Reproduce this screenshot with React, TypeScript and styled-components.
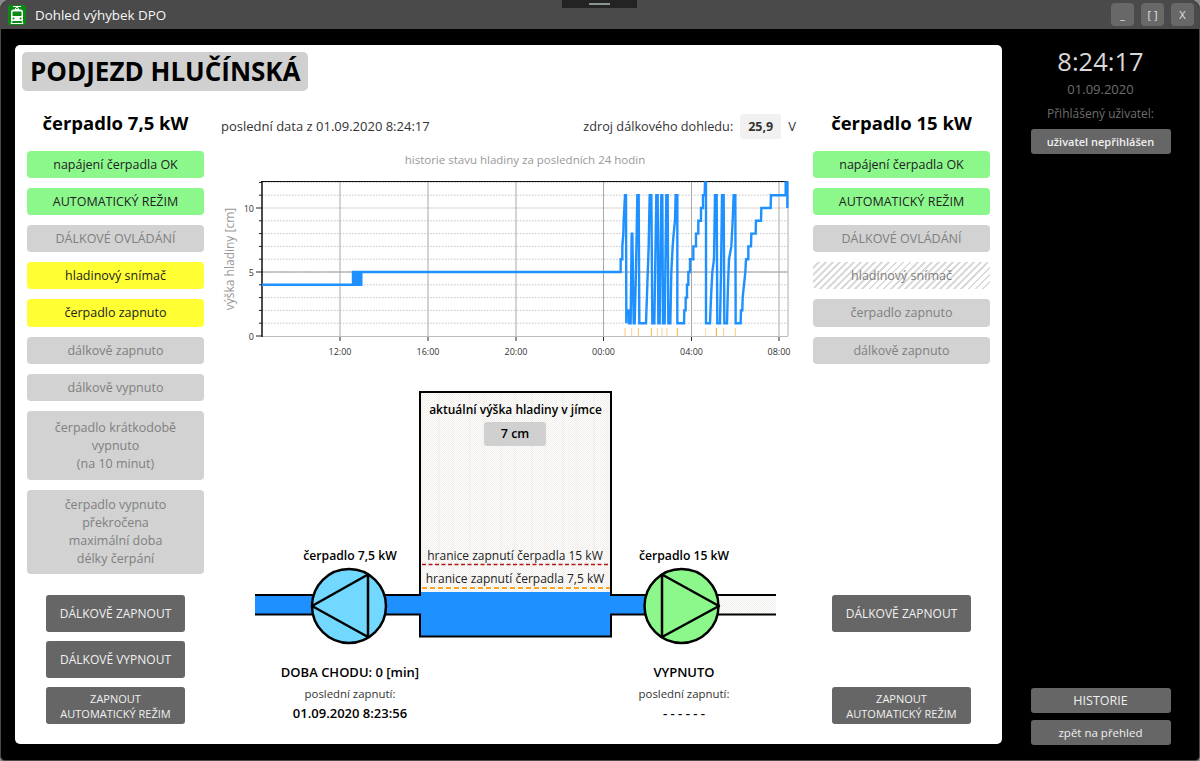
import { FC } from "react";
import styled, { createGlobalStyle } from "styled-components";

const GlobalStyle = createGlobalStyle`
  html, body {
    margin: 0;
    padding: 0;
    background: #8a8a8a;
    font-family: "Open Sans", "Noto Sans", sans-serif;
  }
  * { box-sizing: border-box; }
`;

const AppWindow = styled.div`
  position: relative;
  width: 1200px;
  height: 761px;
  background: #000;
  border: 1px solid #4a4a4a;
  border-top: 0;
  border-radius: 9px 9px 5px 5px;
  overflow: hidden;
  display: flex;
  flex-direction: column;
`;

const TitleBar = styled.header`
  height: 29px;
  background: #4a4a4a;
  display: flex;
  align-items: center;
  padding: 0 5px 0 7px;
  flex-shrink: 0;
`;

const AppTitle = styled.span`
  margin-left: 9px;
  flex: 1;
  color: #f6f6f6;
  font-size: 13.4px;
`;

const Notch = styled.div`
  position: absolute;
  top: 0;
  left: 561px;
  width: 75px;
  height: 8px;
  background: #232323;
  &::after {
    content: "";
    position: absolute;
    left: 27px;
    top: 3px;
    width: 21px;
    height: 2px;
    background: #8b9590;
  }
`;

const WindowButtons = styled.div`
  display: flex;
  gap: 7px;
`;

const WindowButton = styled.div`
  width: 23px;
  height: 23px;
  background: #686868;
  border-radius: 4px;
  color: #e4e4e4;
  font-size: 11px;
  display: flex;
  align-items: center;
  justify-content: center;
`;

const Body = styled.div`
  flex: 1;
  display: flex;
  padding: 16px 0 16px 14px;
`;

const Panel = styled.main`
  width: 987px;
  height: 699px;
  background: #fff;
  border-radius: 5px;
  padding: 7px 12px 0;
`;

const PageTitle = styled.h1`
  display: inline-block;
  margin: 0 0 0 -5px;
  height: 39px;
  padding: 0 7px 0 8px;
  background: #d0d0d0;
  border-radius: 5px;
  color: #000;
  font-size: 26px;
  line-height: 39px;
  font-weight: 700;
`;

const Columns = styled.div`
  display: grid;
  grid-template-columns: 177px 609px 177px;
  margin-top: 17px;
`;

const PumpColumn = styled.section`
  height: 616px;
  display: flex;
  flex-direction: column;
`;

const PumpHeading = styled.h2`
  margin: 0;
  height: 43px;
  color: #000;
  font-size: 18.5px;
  font-weight: 700;
  line-height: 30px;
  text-align: center;
`;

const StatusStack = styled.div`
  display: flex;
  flex-direction: column;
  gap: 10px;
`;

type Tone = "ok" | "warn" | "off" | "hatch";

const toneStyles: Record<Tone, string> = {
  ok: "background: #8cf88c; color: #222;",
  warn: "background: #ffff33; color: #222;",
  off: "background: #d2d2d2; color: #808080;",
  hatch:
    "background: repeating-linear-gradient(135deg, #fff 0 3px, #dcdad8 3px 5px); color: #808080;",
};

const StatusBox = styled.div<{ $tone: Tone; $h?: number }>`
  ${(p) => toneStyles[p.$tone]}
  min-height: ${(p) => p.$h ?? 27}px;
  border-radius: 4px;
  font-size: 12.5px;
  line-height: 18px;
  display: flex;
  align-items: center;
  justify-content: center;
  text-align: center;
`;

const ColumnFooter = styled.div`
  margin-top: auto;
  height: 129px;
  display: flex;
  flex-direction: column;
  align-items: center;
  justify-content: space-between;
`;

const DarkButton = styled.button<{ $small?: boolean }>`
  width: 139px;
  height: 37px;
  padding: 0;
  border: 0;
  background: #666;
  border-radius: 3px;
  color: #f0f0f0;
  font-family: inherit;
  font-size: ${(p) => (p.$small ? "11px" : "12px")};
  line-height: 15px;
`;

const Centre = styled.section`
  display: flex;
  flex-direction: column;
`;

const InfoRow = styled.div`
  height: 36px;
  padding: 0 17px 0 17px;
  display: flex;
  align-items: center;
  color: #333;
  font-size: 13px;
`;

const InfoGrow = styled.span`
  flex: 1;
`;

const SourceLabel = styled.span`
  font-size: 12.7px;
`;

const VoltageChip = styled.span`
  width: 41px;
  height: 25px;
  margin: 0 7px;
  background: #f1f1f1;
  border-radius: 3px;
  font-size: 12.5px;
  font-weight: 700;
  line-height: 25px;
  text-align: center;
`;

const ChartTitle = styled.div`
  margin: 8px 0 5px;
  padding-left: 33px;
  height: 15px;
  color: #999;
  font-size: 11.5px;
  line-height: 15px;
  text-align: center;
`;

const Drawing = styled.svg<{ $gap?: number }>`
  display: block;
  margin-top: ${(p) => p.$gap ?? 0}px;
  text {
    font-family: "Open Sans", "Noto Sans", sans-serif;
  }
`;

const PumpStates = styled.div`
  display: flex;
  gap: 134px;
  margin: 15px 0 0 46px;
`;

const PumpState = styled.div`
  width: 200px;
  text-align: center;
  color: #000;
`;

const StateTitle = styled.div`
  font-size: 13px;
  font-weight: 600;
  line-height: 18px;
`;

const StateLabel = styled.div`
  margin-top: 5px;
  color: #333;
  font-size: 11.4px;
  line-height: 16px;
`;

const StateValue = styled.div`
  margin-top: 2px;
  font-size: 13px;
  font-weight: 600;
  line-height: 18px;
`;

const SidePane = styled.aside`
  width: 198px;
  height: 700px;
  display: flex;
  flex-direction: column;
  align-items: center;
  justify-content: space-between;
`;

const SideGroup = styled.div`
  width: 140px;
  display: flex;
  flex-direction: column;
  align-items: center;
`;

const Clock = styled.div`
  color: #d8d8d8;
  font-size: 25.5px;
  line-height: 32px;
`;

const ClockDate = styled.div`
  margin-top: 3px;
  color: #6e6e6e;
  font-size: 13px;
  line-height: 18px;
`;

const UserLabel = styled.div`
  margin-top: 8px;
  color: #6e6e6e;
  font-size: 12px;
  line-height: 16px;
  white-space: nowrap;
`;

const SideButton = styled.div<{ $big?: boolean; $bold?: boolean }>`
  width: 140px;
  height: 25px;
  margin-top: ${(p) => (p.$big ? 0 : 7)}px;
  background: #666;
  border-radius: 3px;
  color: #f0f0f0;
  font-size: ${(p) => (p.$bold ? 11 : p.$big ? 12.5 : 11.5)}px;
  font-weight: ${(p) => (p.$bold ? 600 : 400)};
  line-height: 25px;
  text-align: center;
`;

const px = (zx: number) => 590 + zx / 3;
const py = (v: number) => 336 - v * 12.8;

const hours = [
  { x: 340, label: "12:00" },
  { x: 428, label: "16:00" },
  { x: 516, label: "20:00" },
  { x: 603.5, label: "00:00" },
  { x: 691.5, label: "04:00" },
  { x: 779, label: "08:00" },
];

// level trace read off the reference, x in 1/3 px from 590
const trace: [number, number][] = [
  [92, 5], [92, 6], [97, 6], [97, 7], [100, 8], [101, 9], [103, 10], [105, 11], [108, 11], [109, 1],
  [109, 2], [116, 2], [117, 1], [122, 1], [125, 8], [127, 8], [131, 1], [134, 1], [137, 4], [140, 8],
  [142, 11], [146, 11], [148, 1], [155, 1], [168, 1], [172, 4], [176, 7], [179, 11], [184, 11], [187, 1],
  [193, 1], [196, 6], [199, 11], [203, 11], [205, 1], [209, 1], [212, 8], [214, 11], [217, 11], [219, 1],
  [224, 1], [227, 7], [229, 11], [233, 11], [235, 1], [241, 1], [244, 5], [248, 7], [251, 8], [255, 9],
  [257, 11], [262, 11], [262, 1], [282, 1], [283, 2], [287, 2], [287, 3], [291, 3], [291, 4], [295, 4],
  [295, 5], [300, 5], [300, 6], [310, 6], [310, 7], [318, 7], [318, 8], [325, 8], [325, 9], [333, 9],
  [333, 10], [339, 10], [339, 11], [344, 11], [345, 12], [348, 12], [348, 1], [360, 1], [363, 3], [367, 5],
  [372, 6], [375, 11], [380, 11], [382, 1], [390, 1], [393, 5], [396, 11], [401, 11], [403, 1], [411, 1],
  [414, 4], [417, 6], [424, 7], [428, 9], [431, 11], [436, 11], [437, 1], [452, 1], [453, 2], [457, 2],
  [458, 3], [462, 4], [466, 5], [468, 6], [475, 6], [475, 7], [483, 7], [484, 8], [497, 8], [498, 9],
  [513, 9], [514, 10], [542, 10], [543, 11], [587, 11], [587, 12], [592, 12], [592, 10],
];

const pumpTicks: [number, number][] = [
  [105, 0.6], [125, 0.5], [145, 0.7], [184, 0.8], [202, 0.5], [216, 0.5], [231, 0.5], [262, 0.9],
  [347, 0.4], [379, 1], [401, 0.6], [436, 0.6],
];

const LevelChart: FC = () => {
  const line =
    `262,${py(4)} 353,${py(4)} 353,${py(5)} 620.6,${py(5)} ` +
    trace.map(([x, v]) => `${px(x)},${py(v)}`).join(" ");
  return (
    <Drawing width={609} height={196} viewBox="204 172 609 196">
      <text
        x={234}
        y={259}
        fontSize={12}
        fill="#999"
        textAnchor="middle"
        transform="rotate(-90 234 259)"
      >
        výška hladiny [cm]
      </text>
      {Array.from({ length: 12 }, (_, v) => v + 1).map((v) => (
        <line
          key={v}
          x1={262}
          x2={788}
          y1={py(v)}
          y2={py(v)}
          stroke="#c4c4c4"
          strokeDasharray="1.5 1.5"
        />
      ))}
      {Array.from({ length: 13 }, (_, v) => v).map((v) => (
        <line key={v} x1={v % 5 === 0 ? 256 : 259} x2={262} y1={py(v)} y2={py(v)} stroke="#222" />
      ))}
      <line x1={262} x2={788} y1={py(10)} y2={py(10)} stroke="#efe9e5" strokeWidth={2} />
      <line x1={262} x2={788} y1={py(5)} y2={py(5)} stroke="#9a9a9a" />
      {hours.map((h) => (
        <g key={h.label}>
          <line x1={h.x} x2={h.x} y1={182} y2={336} stroke="#a8a8a8" />
          <line x1={h.x} x2={h.x} y1={336} y2={341} stroke="#222" />
          <text x={h.x} y={355} fontSize={9} fill="#333" textAnchor="middle">
            {h.label}
          </text>
        </g>
      ))}
      <line x1={788} x2={788} y1={182} y2={336} stroke="#b0b0b0" />
      <line x1={261} x2={788} y1={336.5} y2={336.5} stroke="#bdbdbd" />
      <line x1={261} x2={788} y1={181.5} y2={181.5} stroke="#111" />
      <line x1={262} x2={262} y1={181} y2={337} stroke="#111" strokeWidth={1.5} />
      {pumpTicks.map(([x, o]) => (
        <line key={x} x1={px(x)} x2={px(x)} y1={328} y2={336} stroke="#f5a623" strokeOpacity={o} />
      ))}
      <rect x={352} y={272} width={10.5} height={14} fill="#1e90ff" />
      <polyline points={line} fill="none" stroke="#1e90ff" strokeWidth={2.4} />
      <text x={254} y={212} fontSize={9} fill="#333" textAnchor="end">10</text>
      <text x={254} y={276} fontSize={9} fill="#333" textAnchor="end">5</text>
      <text x={254} y={340} fontSize={9} fill="#333" textAnchor="end">0</text>
    </Drawing>
  );
};

const PumpSymbol: FC<{ cx: number; fill: string; tip: number; base: number }> = ({ cx, fill, tip, base }) => (
  <g stroke="#000" strokeWidth={2.5} strokeLinejoin="round">
    <circle cx={cx} cy={606} r={37} fill={fill} />
    <polygon points={`${tip},606 ${base},574.5 ${base},637`} fill={fill} />
  </g>
);

const PitDiagram: FC = () => (
  <Drawing $gap={12} width={609} height={268} viewBox="204 380 609 268">
    <defs>
      <pattern id="dither" width={2} height={2} patternUnits="userSpaceOnUse">
        <rect width={2} height={2} fill="#fdfdfc" />
        <rect width={1} height={1} fill="#f0eeec" />
        <rect x={1} y={1} width={1} height={1} fill="#f3f1ef" />
      </pattern>
      <pattern id="streaks" width={31} height={10} patternUnits="userSpaceOnUse">
        <rect x={4} width={2} height={10} fill="#f3e4d8" />
        <rect x={17} width={3} height={10} fill="#f6ebe2" />
      </pattern>
    </defs>

    <rect x={420} y={392} width={191} height={244} fill="url(#dither)" />
    <rect x={420} y={392} width={191} height={200} fill="url(#streaks)" fillOpacity={0.3} />
    <rect x={720} y={596} width={56} height={18} fill="url(#dither)" />

    <rect x={255} y={595} width={170} height={19} fill="#1e90ff" />
    <rect x={606} y={595} width={45} height={19} fill="#1e90ff" />
    <rect x={420} y={592} width={191} height={44} fill="#1e90ff" />

    <path
      d="M255 595 H420 V392 H611 V595 H776 M255 614.5 H420 V636.5 H611 V614.5 H776"
      fill="none"
      stroke="#000"
      strokeWidth={2}
    />

    <line x1={422} x2={610} y1={564.5} y2={564.5} stroke="#b01818" strokeWidth={1.5} strokeDasharray="4 2.5" />
    <line x1={422} x2={610} y1={588} y2={588} stroke="#f5a623" strokeWidth={2} strokeDasharray="5 3" />

    <PumpSymbol cx={349} fill="#73d8ff" tip={312} base={368} />
    <PumpSymbol cx={681.5} fill="#8cf88c" tip={719} base={662} />

    <text x={350} y={560} fontSize={12.2} fontWeight={600} fill="#000" textAnchor="middle">čerpadlo 7,5 kW</text>
    <text x={684} y={560} fontSize={12.2} fontWeight={600} fill="#000" textAnchor="middle">čerpadlo 15 kW</text>

    <text x={515.5} y={414} fontSize={12} fontWeight={600} fill="#000" textAnchor="middle">aktuální výška hladiny v jímce</text>
    <rect x={484} y={422} width={62} height={24} rx={3} fill="#d0d0d0" />
    <text x={515} y={438} fontSize={12.5} fontWeight={600} fill="#000" textAnchor="middle">7 cm</text>

    <text x={515} y={560} fontSize={12} fill="#222" textAnchor="middle">hranice zapnutí čerpadla 15 kW</text>
    <text x={515} y={583} fontSize={12} fill="#222" textAnchor="middle">hranice zapnutí čerpadla 7,5 kW</text>
  </Drawing>
);

const TramLogo: FC = () => (
  <svg width={18} height={20} viewBox="0 0 18 20">
    <rect width={18} height={20} rx={2} fill="#0a8a14" />
    <path d="M5 1.5 H13 M9 1.5 L7 4.5 H11 Z" stroke="#fff" strokeWidth={1} fill="none" />
    <path
      d="M5 4.5 H13 Q15 4.5 15 7 V15 Q15 16 14 16 H4 Q3 16 3 15 V7 Q3 4.5 5 4.5 Z"
      fill="#fff"
    />
    <rect x={4.5} y={6.5} width={9} height={4.5} fill="#0a8a14" />
    <circle cx={5.5} cy={13.5} r={1} fill="#0a8a14" />
    <circle cx={12.5} cy={13.5} r={1} fill="#0a8a14" />
    <path d="M4 16 L3 18.5 M14 16 L15 18.5 M3 18.5 H15" stroke="#fff" strokeWidth={1} />
  </svg>
);

const App: FC = () => (
  <AppWindow>
    <GlobalStyle />
    <TitleBar>
      <TramLogo />
      <AppTitle>Dohled výhybek DPO</AppTitle>
      <WindowButtons>
        <WindowButton>_</WindowButton>
        <WindowButton>[ ]</WindowButton>
        <WindowButton>X</WindowButton>
      </WindowButtons>
    </TitleBar>
    <Notch />
    <Body>
      <Panel>
        <PageTitle>PODJEZD HLUČÍNSKÁ</PageTitle>
        <Columns>
          <PumpColumn>
            <PumpHeading>čerpadlo 7,5 kW</PumpHeading>
            <StatusStack>
              <StatusBox $tone="ok">napájení čerpadla OK</StatusBox>
              <StatusBox $tone="ok">AUTOMATICKÝ REŽIM</StatusBox>
              <StatusBox $tone="off">DÁLKOVÉ OVLÁDÁNÍ</StatusBox>
              <StatusBox $tone="warn">hladinový snímač</StatusBox>
              <StatusBox $tone="warn" $h={28}>čerpadlo zapnuto</StatusBox>
              <StatusBox $tone="off">dálkově zapnuto</StatusBox>
              <StatusBox $tone="off">dálkově vypnuto</StatusBox>
              <StatusBox $tone="off" $h={69}>
                čerpadlo krátkodobě
                <br />
                vypnuto
                <br />
                (na 10 minut)
              </StatusBox>
              <StatusBox $tone="off" $h={84}>
                čerpadlo vypnuto
                <br />
                překročena
                <br />
                maximální doba
                <br />
                délky čerpání
              </StatusBox>
            </StatusStack>
            <ColumnFooter>
              <DarkButton>DÁLKOVĚ ZAPNOUT</DarkButton>
              <DarkButton>DÁLKOVĚ VYPNOUT</DarkButton>
              <DarkButton $small>
                ZAPNOUT
                <br />
                AUTOMATICKÝ REŽIM
              </DarkButton>
            </ColumnFooter>
          </PumpColumn>

          <Centre>
            <InfoRow>
              <InfoGrow>poslední data z 01.09.2020 8:24:17</InfoGrow>
              <SourceLabel>zdroj dálkového dohledu:</SourceLabel>
              <VoltageChip>25,9</VoltageChip>
              <span>V</span>
            </InfoRow>
            <ChartTitle>historie stavu hladiny za posledních 24 hodin</ChartTitle>
            <LevelChart />
            <PitDiagram />
            <PumpStates>
              <PumpState>
                <StateTitle>DOBA CHODU: 0 [min]</StateTitle>
                <StateLabel>poslední zapnutí:</StateLabel>
                <StateValue>01.09.2020 8:23:56</StateValue>
              </PumpState>
              <PumpState>
                <StateTitle>VYPNUTO</StateTitle>
                <StateLabel>poslední zapnutí:</StateLabel>
                <StateValue>- - - - - -</StateValue>
              </PumpState>
            </PumpStates>
          </Centre>

          <PumpColumn>
            <PumpHeading>čerpadlo 15 kW</PumpHeading>
            <StatusStack>
              <StatusBox $tone="ok">napájení čerpadla OK</StatusBox>
              <StatusBox $tone="ok">AUTOMATICKÝ REŽIM</StatusBox>
              <StatusBox $tone="off">DÁLKOVÉ OVLÁDÁNÍ</StatusBox>
              <StatusBox $tone="hatch">hladinový snímač</StatusBox>
              <StatusBox $tone="off" $h={28}>čerpadlo zapnuto</StatusBox>
              <StatusBox $tone="off">dálkově zapnuto</StatusBox>
            </StatusStack>
            <ColumnFooter>
              <DarkButton>DÁLKOVĚ ZAPNOUT</DarkButton>
              <DarkButton $small>
                ZAPNOUT
                <br />
                AUTOMATICKÝ REŽIM
              </DarkButton>
            </ColumnFooter>
          </PumpColumn>
        </Columns>
      </Panel>

      <SidePane>
        <SideGroup>
          <Clock>8:24:17</Clock>
          <ClockDate>01.09.2020</ClockDate>
          <UserLabel>Přihlášený uživatel:</UserLabel>
          <SideButton $bold>uživatel nepřihlášen</SideButton>
        </SideGroup>
        <SideGroup>
          <SideButton $big>HISTORIE</SideButton>
          <SideButton>zpět na přehled</SideButton>
        </SideGroup>
      </SidePane>
    </Body>
  </AppWindow>
);

export default App;
